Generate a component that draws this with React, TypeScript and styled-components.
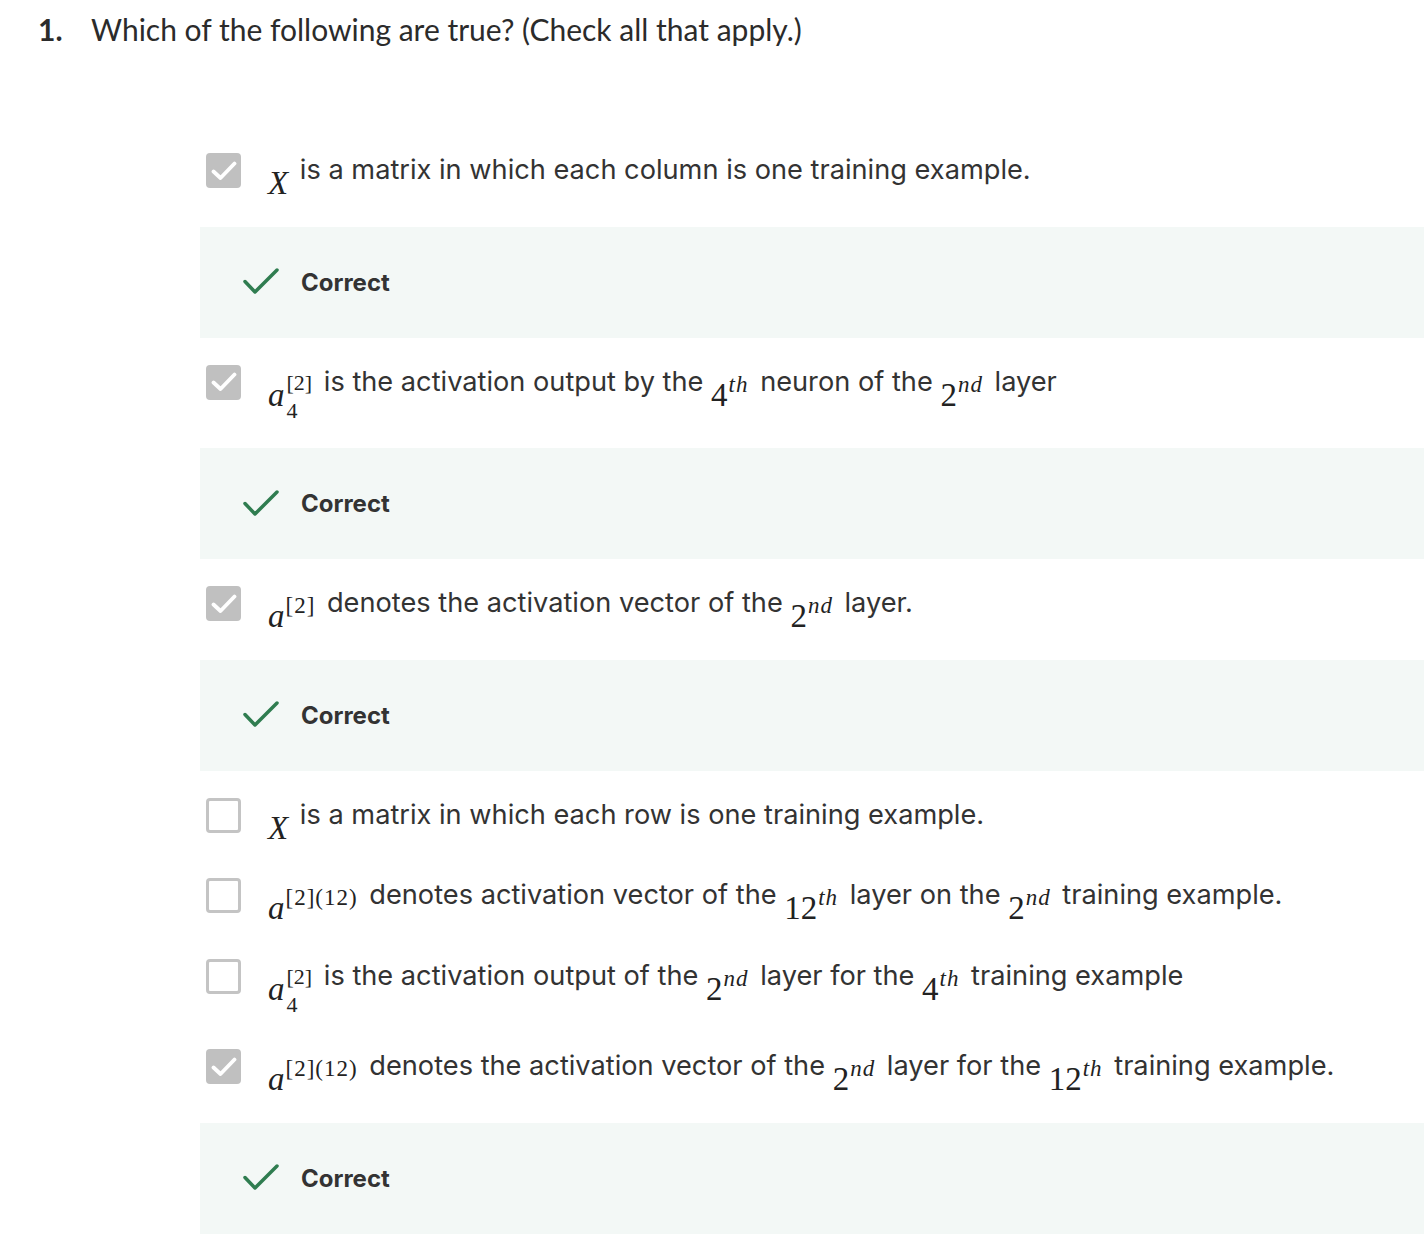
import React from 'react';
import styled, { createGlobalStyle } from 'styled-components';

const Global = createGlobalStyle`
  html, body { margin: 0; padding: 0; background: #ffffff; }
  body { font-family: Inter, "Liberation Sans", sans-serif; color: #333333; }
`;

const Page = styled.div`
  padding-top: 8px;
  padding-bottom: 6px;
`;

const Title = styled.h2`
  margin: 0;
  padding-left: 38px;
  display: flex;
  font-family: Lato, "Open Sans", sans-serif;
  font-weight: 400;
  font-size: 30px;
  line-height: 42px;
  color: #2b2b2b;
`;

const Num = styled.span`
  font-weight: 700;
  width: 53px;
  flex: none;
`;

const List = styled.div`
  margin: 86px 0 0 200px;
`;

const OptionRow = styled.div`
  display: flex;
  align-items: flex-start;
  padding: 17px 0 16.5px 6px;
`;

const Box = styled.span<{ $checked: boolean }>`
  width: 35px;
  height: 35px;
  box-sizing: border-box;
  border-radius: 4px;
  flex: none;
  display: flex;
  align-items: center;
  justify-content: center;
  background: ${(p) => (p.$checked ? '#c0c0c0' : '#ffffff')};
  border: ${(p) => (p.$checked ? 'none' : '3.5px solid #c4c4c4')};
`;

const Label = styled.div`
  margin-left: 27px;
  font-size: 27.2px;
  line-height: 34px;
  min-height: 46px;
  color: #333333;
`;

const M = styled.span`
  display: inline-block;
  vertical-align: -15px;
  font-family: "Liberation Serif", "DejaVu Serif", serif;
  font-size: 33px;
  line-height: 1;
  color: #222222;
  margin-right: 4px;
`;

const V = styled.i`
  font-style: italic;
`;

const Sup = styled.span`
  display: inline-block;
  font-size: 23px;
  vertical-align: 14px;
  margin-left: 1px;
  letter-spacing: 1px;
`;

const Stack = styled.span`
  display: inline-flex;
  flex-direction: column;
  vertical-align: 16px;
  font-size: 22px;
  line-height: 1;
  margin-left: 2px;
`;

const StackSub = styled.span`
  margin-top: 6px;
`;

const Feedback = styled.div`
  margin: 10px 0;
  height: 111px;
  background: #f3f8f6;
  display: flex;
  align-items: center;
  padding-left: 43px;
  gap: 22px;
`;

const Correct = styled.span`
  font-family: Inter, "Liberation Sans", sans-serif;
  font-weight: 700;
  font-size: 24px;
  color: #333333;
`;

const CheckMark = () => (
  <svg width="26" height="20" viewBox="0 0 26 20">
    <path d="M2.5 10.5 L9.5 17 L23.5 2.5" fill="none" stroke="#ffffff" strokeWidth="3.8" strokeLinecap="round" strokeLinejoin="round" />
  </svg>
);

const GreenCheck = () => (
  <svg width="36" height="28" viewBox="0 0 36 28">
    <path d="M2 13.5 L12 24 L34 2" fill="none" stroke="#2f7d50" strokeWidth="3.5" strokeLinecap="round" strokeLinejoin="round" />
  </svg>
);

type Opt = { checked: boolean; correct: boolean; label: React.ReactNode };

const A4 = () => (
  <M>
    <V>a</V>
    <Stack>
      <span>[2]</span>
      <StackSub>4</StackSub>
    </Stack>
  </M>
);

const A212 = () => (
  <M>
    <V>a</V>
    <Sup>[2](12)</Sup>
  </M>
);

const Ord = ({ n, s }: { n: string; s: string }) => (
  <M>
    {n}
    <Sup>
      <V>{s}</V>
    </Sup>
  </M>
);

const options: Opt[] = [
  {
    checked: true,
    correct: true,
    label: (
      <>
        <M><V>X</V></M> is a matrix in which each column is one training example.
      </>
    ),
  },
  {
    checked: true,
    correct: true,
    label: (
      <>
        <A4 /> is the activation output by the <Ord n="4" s="th" /> neuron of the <Ord n="2" s="nd" /> layer
      </>
    ),
  },
  {
    checked: true,
    correct: true,
    label: (
      <>
        <M><V>a</V><Sup>[2]</Sup></M> denotes the activation vector of the <Ord n="2" s="nd" /> layer.
      </>
    ),
  },
  {
    checked: false,
    correct: false,
    label: (
      <>
        <M><V>X</V></M> is a matrix in which each row is one training example.
      </>
    ),
  },
  {
    checked: false,
    correct: false,
    label: (
      <>
        <A212 /> denotes activation vector of the <Ord n="12" s="th" /> layer on the <Ord n="2" s="nd" /> training example.
      </>
    ),
  },
  {
    checked: false,
    correct: false,
    label: (
      <>
        <A4 /> is the activation output of the <Ord n="2" s="nd" /> layer for the <Ord n="4" s="th" /> training example
      </>
    ),
  },
  {
    checked: true,
    correct: true,
    label: (
      <>
        <A212 /> denotes the activation vector of the <Ord n="2" s="nd" /> layer for the <Ord n="12" s="th" /> training example.
      </>
    ),
  },
];

export default function App() {
  return (
    <Page>
      <Global />
      <Title>
        <Num>1.</Num>
        <span>Which of the following are true? (Check all that apply.)</span>
      </Title>
      <List>
        {options.map((o, i) => (
          <React.Fragment key={i}>
            <OptionRow>
              <Box $checked={o.checked}>{o.checked && <CheckMark />}</Box>
              <Label>{o.label}</Label>
            </OptionRow>
            {o.correct && (
              <Feedback>
                <GreenCheck />
                <Correct>Correct</Correct>
              </Feedback>
            )}
          </React.Fragment>
        ))}
      </List>
    </Page>
  );
}
